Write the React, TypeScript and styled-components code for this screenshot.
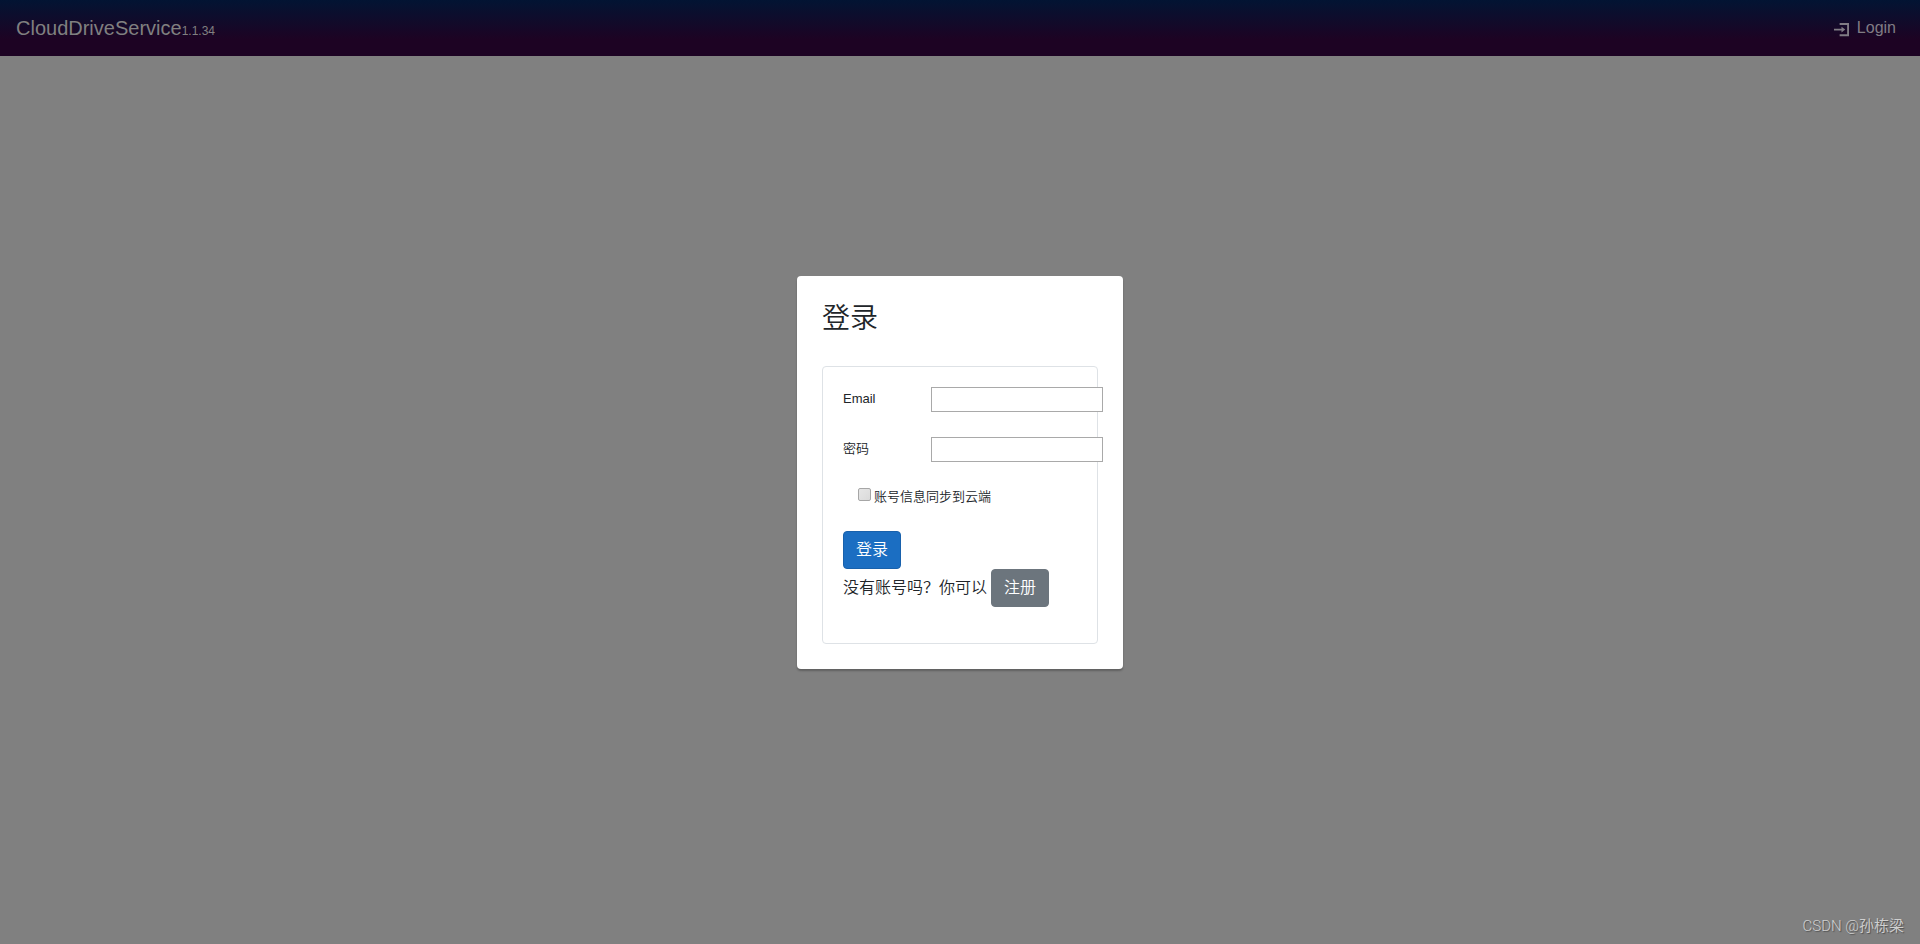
import React from "react";
import styled, { createGlobalStyle } from "styled-components";

const GlobalStyle = createGlobalStyle`
  *, *::before, *::after { box-sizing: border-box; }
  html, body { margin: 0; }
  body {
    background: #808080;
    color: #212529;
    font-family: "Liberation Sans", "Noto Sans CJK SC", sans-serif;
    font-size: 16px;
    font-weight: 350;
    line-height: 24px;
  }
`;

const Page = styled.div`
  display: grid;
  grid-template-rows: 56px 1fr;
  min-height: 100vh;
`;

const TopBar = styled.header`
  display: flex;
  align-items: center;
  justify-content: space-between;
  padding: 0 24px 0 16px;
  background: linear-gradient(180deg, #021433 0%, #1d0323 70%);
  color: #808080;
`;

const Brand = styled.a`
  padding-top: 2px;
  color: inherit;
  font-size: 20px;
  text-decoration: none;
`;

const Version = styled.span`
  font-size: 12px;
`;

const LoginLink = styled.a`
  display: flex;
  align-items: center;
  gap: 8px;
  color: #807c84;
  text-decoration: none;

  svg { margin-top: 4px; }
`;

const Main = styled.main`
  display: flex;
  align-items: center;
  justify-content: center;
  padding-bottom: 56px;
`;

const Dialog = styled.section`
  width: 326px;
  padding: 25px;
  border-radius: 4px;
  background: #fff;
  box-shadow: 0 2px 2px rgba(0, 0, 0, 0.25);
`;

const Title = styled.h3`
  margin: 0 0 29px;
  font-size: 28px;
  font-weight: inherit;
  line-height: 36px;
`;

const Form = styled.form`
  min-height: 278px;
  padding: 20px;
  border: 1px solid #dee2e6;
  border-radius: 4px;
`;

const Field = styled.div`
  display: grid;
  grid-template-columns: 88px 172px;
  align-items: center;
  margin-bottom: 25px;
  font-size: 13px;
`;

const TextInput = styled.input`
  width: 100%;
  height: 25px;
  padding: 1px 4px;
  border: 1px solid #a9a9a9;
  background: #fff;
  font: inherit;
`;

const CheckField = styled.div`
  display: flex;
  align-items: center;
  gap: 3px;
  height: 20px;
  margin: 0 0 24px 15px;
  font-size: 13px;
`;

const Checkbox = styled.input`
  appearance: none;
  width: 13px;
  height: 13px;
  margin: 0 0 4px;
  border: 1px solid #a6a6a6;
  border-radius: 2px;
  background: linear-gradient(135deg, #e6e6e6, #dadada);

  &:checked { background: #1b6ec2; }
`;

const Button = styled.button<{ $secondary?: boolean }>`
  height: 38px;
  padding: 6px 12px;
  border: 1px solid ${(p) => (p.$secondary ? "#6c757d" : "#1861ac")};
  border-radius: 4px;
  background: ${(p) => (p.$secondary ? "#6c757d" : "#1b6ec2")};
  color: #fff;
  font: inherit;
  cursor: pointer;
`;

const ButtonRow = styled.div`
  display: flex;
  align-items: center;
  gap: 4px;
`;

const Watermark = styled.div`
  position: absolute;
  right: 16px;
  bottom: 6px;
  color: #d0d0d0;
  font-family: Roboto, "Noto Sans CJK SC", sans-serif;
  font-size: 15px;
  text-shadow: 1px 1px 1px #505050;
`;

const LoginIcon = () => (
  <svg width="15" height="15" viewBox="0 0 8 8" fill="currentColor" aria-hidden="true">
    <path d="M3 0v1h4v5h-4v1h5v-7h-5zm1 2v1h-4v1h4v1l2-1.5-2-1.5z" />
  </svg>
);

export default function App() {
  return (
    <>
      <GlobalStyle />
      <Page>
        <TopBar>
          <Brand href="#">
            CloudDriveService<Version>1.1.34</Version>
          </Brand>
          <LoginLink href="#login">
            <LoginIcon />
            Login
          </LoginLink>
        </TopBar>
        <Main>
          <Dialog role="dialog" aria-labelledby="login-title">
            <Title id="login-title">登录</Title>
            <Form onSubmit={(e) => e.preventDefault()}>
              <Field>
                <label htmlFor="email">Email</label>
                <TextInput id="email" type="text" />
              </Field>
              <Field>
                <label htmlFor="password">密码</label>
                <TextInput id="password" type="password" />
              </Field>
              <CheckField>
                <Checkbox id="sync" type="checkbox" />
                <label htmlFor="sync">账号信息同步到云端</label>
              </CheckField>
              <ButtonRow>
                <Button type="submit">登录</Button>
              </ButtonRow>
              <ButtonRow>
                <span>没有账号吗？你可以</span>
                <Button type="button" $secondary>注册</Button>
              </ButtonRow>
            </Form>
          </Dialog>
        </Main>
      </Page>
      <Watermark>CSDN @孙栋梁</Watermark>
    </>
  );
}
